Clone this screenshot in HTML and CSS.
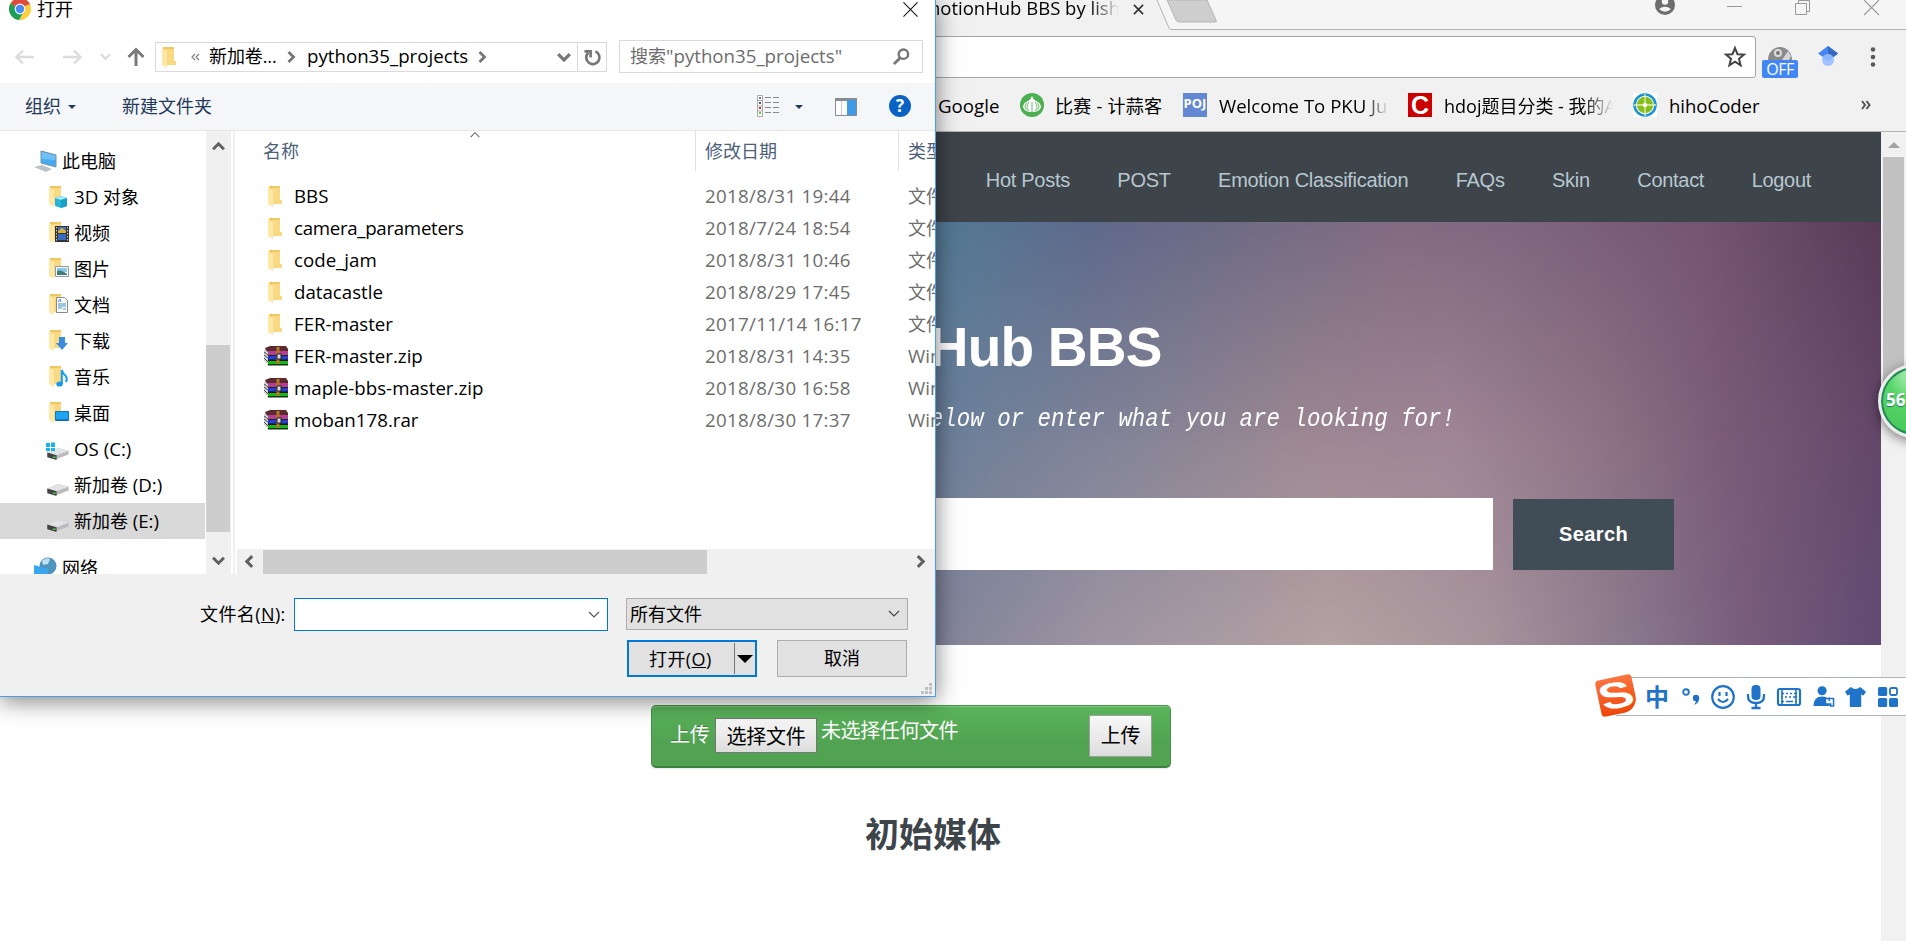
FILE: index.html
```html
<!DOCTYPE html>
<html lang="zh-CN">
<head>
<meta charset="utf-8">
<title>EmotionHub BBS</title>
<link rel="stylesheet" href="styles.css">
</head>
<body>
<svg class="defs" aria-hidden="true">
  <symbol id="folder" viewBox="0 0 14 21"><path d="M1 0h11v17H1z" fill="#f1c761"/><path d="M4 2h8v12h2v4H4z" fill="#f9da82"/><path d="M0 1l5 3v17l-5-3z" fill="#fde8a6"/></symbol>
  <symbol id="rar" viewBox="0 0 24 20">
    <path d="M1 2L6 0h16l2 3v4H3z" fill="#5a2a2c"/><path d="M0 3l4 3v13l-4-4z" fill="#d8d8d8"/><path d="M0 6l4 3M0 9l4 3M0 12l4 4" stroke="#444" fill="none"/>
    <path d="M4 5h20v4H4z" fill="#b43e9a"/><path d="M4 9h20v1.500H4z" fill="#222"/><path d="M4 10h20v4H4z" fill="#2a3fd0"/><path d="M4 13.500h20v1.500H4z" fill="#111"/><path d="M4 15h20v3H4z" fill="#16b61c"/><path d="M4 18h20v1.500H4z" fill="#063c08"/>
    <path d="M14 1v17" stroke="#b87a24" stroke-width="3"/><path d="M13 8h4v5h-4z" fill="#ddd" stroke="#222"/></symbol>
  <symbol id="drive" viewBox="0 0 24 14"><path d="M1 6L13 1l11 3v4l-13 5L1 10z" fill="#b9bbbe"/><path d="M1 6L13 1l11 3-13 5z" fill="#e2e3e5"/><path d="M1 6l10 3v5L1 11z" fill="#444"/><path d="M7 11h3" stroke="#4bd14b" stroke-width="1.500"/></symbol>
  <symbol id="chev" viewBox="0 0 12 12"><path d="M1 3.500L6 8.500 11 3.500" fill="none" stroke="currentColor" stroke-width="2.800"/></symbol>
  <symbol id="thinchev" viewBox="0 0 12 8"><path d="M1 1l5 5 5-5" fill="none" stroke="currentColor" stroke-width="1.200"/></symbol>
</svg>

<div class="browser">
  <div class="tabstrip">
    <span class="tab-title">EmotionHub BBS by lish</span>
    <svg class="tab-x" viewBox="0 0 12 12"><path d="M1 1l10 10M11 1L1 11" stroke="#333" stroke-width="1.800"/></svg>
    <svg class="tab-edge" viewBox="0 0 749 30"><path d="M0 0l13 29.500h736V0z" fill="#f5f5f5"/><path d="M0 0l12 28q.5 1.500 2 1.500h735" fill="none" stroke="#b3b3b3"/><path d="M10 0l9 20q.8 2 3 2h36q2 0 1-2L50 0z" fill="#cecece" stroke="#b5b5b5"/></svg>
    <div class="winctl">
      <svg class="w-user" viewBox="0 0 20 20"><circle cx="10" cy="10" r="10" fill="#6d6d6d"/><circle cx="10" cy="6.500" r="3.200" fill="#f5f5f5"/><path d="M4 14q6-4.500 12 0-6 5.500-12 0z" fill="#f5f5f5"/></svg>
      <svg class="w-min" viewBox="0 0 15 15"><path d="M0 6.500h15" stroke="#999"/></svg>
      <svg class="w-max" viewBox="0 0 15 15"><path d="M.5 3.500h11v11H.5zM3.500 3V.5h11v11H12" fill="none" stroke="#999"/></svg>
      <svg class="w-close" viewBox="0 0 15 15"><path d="M0 0l15 15M15 0L0 15" stroke="#999" stroke-width="1.100"/></svg>
    </div>
  </div>
  <div class="toolbar">
    <div class="omnibox"><svg viewBox="0 0 22 22"><path d="M11 2l2.500 6.200 6.500.4-5 4.200 1.600 6.500L11 15.700l-5.600 3.600L7 12.800 2 8.600l6.500-.4z" fill="none" stroke="#444" stroke-width="2"/></svg></div>
    <div class="ext-off"><svg viewBox="0 0 24 14"><path d="M0 14a12 13 0 0 1 24 0z" fill="#8a8a8a"/><circle cx="10" cy="7" r="4" fill="#ddd"/><circle cx="10" cy="7" r="2" fill="#777"/><path d="M14 14l6-9 3 5-2 4z" fill="#d5d5d5"/></svg><span>OFF</span></div>
    <svg class="ext-cap" viewBox="0 0 20 20"><path d="M0 7.500L10 0l10 7.500-10 7z" fill="#4285f4"/><path d="M10 0l10 7.500-5 4-5-4z" fill="#356ac3"/><circle cx="10" cy="14" r="6" fill="#a0c3ff"/><path d="M4.500 11.500q5.500-6 11 0L10 15z" fill="#76a7fa" opacity=".5"/></svg>
    <svg class="ext-dots" viewBox="0 0 6 20"><g fill="#5a5a5a"><circle cx="3" cy="2.500" r="2.300"/><circle cx="3" cy="10" r="2.300"/><circle cx="3" cy="17.500" r="2.300"/></g></svg>
  </div>
  <div class="bookmarks">
    <span class="bm b1">Google</span>
    <svg class="bi i1" viewBox="0 0 24 24"><circle cx="12" cy="12" r="12" fill="#4caf50"/><path d="M12 3q1 3 4 5 5 2 5 6-1 5-9 5t-9-5q0-4 5-6 3-2 4-5z" fill="#fff"/><path d="M9 9q-4 5 0 9M15 9q4 5 0 9M6.500 10q-3 4 0 7M17.500 10q3 4 0 7M12 9v10" fill="none" stroke="#4caf50" stroke-width=".8"/></svg>
    <span class="bm b2">比赛 - 计蒜客</span>
    <span class="bi poj">POJ</span>
    <span class="bm b3">Welcome To PKU Ju</span>
    <span class="bi cc">C</span>
    <span class="bm b4">hdoj题目分类 - 我的A</span>
    <svg class="bi i4" viewBox="0 0 24 24"><path d="M0 0h24v24H0z" fill="#fff"/><circle cx="12" cy="12" r="10.500" fill="#fff" stroke="#1a93d6" stroke-width="2.600"/><circle cx="12" cy="12" r="8.200" fill="#86bf1b"/><path d="M12 1v22M1 12h22" stroke="#dff0b8" stroke-width="1.300"/><circle cx="12" cy="12" r="2.200" fill="#fff"/></svg>
    <span class="bm b5">hihoCoder</span>
    <svg class="more" viewBox="0 0 10 10"><path d="M1 1l3 4-3 4M5.500 1l3 4-3 4" fill="none" stroke="#555" stroke-width="2"/></svg>
  </div>
  <div class="view">
    <div class="page">
      <nav class="sitenav"><a>Hot Posts</a><a>POST</a><a>Emotion Classification</a><a>FAQs</a><a>Skin</a><a>Contact</a><a>Logout</a></nav>
      <section class="hero">
        <h1>EmotionHub BBS</h1>
        <p>below or enter what you are looking for!</p>
        <div class="search"><div class="field"></div><div class="go">Search</div></div>
      </section>
      <div class="upload">
        <span class="up-label">上传</span><span class="up-choose">选择文件</span><span class="up-none">未选择任何文件</span><span class="up-send">上传</span>
      </div>
      <h2>初始媒体</h2>
    </div>
    <div class="vscroll"><svg viewBox="0 0 12 6"><path d="M0 6l6-6 6 6z" fill="#a3a3a3"/></svg><div class="vthumb"></div></div>
  </div>
</div>

<div class="speed">56</div>

<div class="ime">
  <div class="sogou"><span>S</span></div>
  <span class="zh">中</span>
  <svg class="m-punc" viewBox="0 0 18 18"><circle cx="4" cy="4" r="2.800" fill="none" stroke="#1f74c9" stroke-width="1.900"/><circle cx="14" cy="10" r="3.200" fill="#1f74c9"/><path d="M17.200 10q0 5-5 7 2-3 2-5z" fill="#1f74c9"/></svg>
  <svg class="m-face" viewBox="0 0 24 24" fill="none" stroke="#1f74c9" stroke-width="2.200"><circle cx="12" cy="12" r="10.800"/><path d="M7 14q5 6 10 0M8.500 7v4M15.500 7v4"/></svg>
  <svg class="m-mic" viewBox="0 0 18 24"><rect x="4.500" y="0" width="9" height="15" rx="4" fill="#1f74c9"/><path d="M1 9v2q0 7 8 7t8-7V9M9 18v4M4.500 23h9" fill="none" stroke="#1f74c9" stroke-width="2.300"/></svg>
  <svg class="m-key" viewBox="0 0 24 18"><rect x="1" y="1" width="22" height="16" rx="2" fill="none" stroke="#1f74c9" stroke-width="2.200"/><path d="M4 5.500h3m2 0h2m2 0h2m2 0h3M4 9h2m2 0h2m2 0h2m2 0h4M4 13.500h3m2 0h7m2 0h2M5 2v15M19 2v15" stroke="#1f74c9" stroke-width="1.600"/></svg>
  <svg class="m-user" viewBox="0 0 22 22"><circle cx="9" cy="5" r="4.800" fill="#1f74c9"/><path d="M0 21q0-10 9-10 6 0 8 5v5z" fill="#1f74c9"/><path d="M12.500 13h8.500v8h-3v-2h-5.500z" fill="#fff" stroke="#1f74c9" stroke-width="1.600"/><path d="M16.500 12v4" stroke="#1f74c9" stroke-width="1.500"/></svg>
  <svg class="m-shirt" viewBox="0 0 22 21"><path d="M6 0q5 4 10 0l6 5-2.500 4-2.500-1v12q0 1-1 1H6q-1 0-1-1V8L2.500 9 0 5z" fill="#1f74c9"/></svg>
  <svg class="m-grid" viewBox="0 0 20 20"><g fill="#1f74c9"><rect width="9.200" height="9" rx="1.500"/><rect y="11" width="9.200" height="9" rx="1.500"/><rect x="11" y="11" width="9" height="9" rx="1.500"/></g><rect x="12" y="1" width="7" height="7" rx="1.500" fill="none" stroke="#1f74c9" stroke-width="1.800"/></svg>
</div>

<div class="dialog">
  <div class="d-title">
    <svg class="chrome" viewBox="0 0 22 22"><circle cx="11" cy="11" r="11" fill="#fdd03b"/><path d="M11 11L1.500 5.500A11 11 0 0 1 20.500 5.500z" fill="#dd4b3e"/><path d="M1.500 5.500A11 11 0 0 0 10 22l5-9-4-2z" fill="#1a9f5c"/><path d="M11 6h9.800" stroke="#dd4b3e" stroke-width="1"/><circle cx="11" cy="11" r="5.400" fill="#f4f4f4"/><circle cx="11" cy="11" r="4.200" fill="#4a8af4"/></svg>
    <span>打开</span>
    <svg class="d-close" viewBox="0 0 16 16"><path d="M.5.5l15 15M15.500.5l-15 15" stroke="#111" stroke-width="1.100"/></svg>
  </div>
  <div class="d-nav">
    <svg class="n-back" viewBox="0 0 20 16"><path d="M19 8H2M8 1.500L1.500 8 8 14.500" fill="none" stroke="#dcdcdc" stroke-width="2.400"/></svg>
    <svg class="n-fwd" viewBox="0 0 20 16"><path d="M1 8h17M12 1.500L18.500 8 12 14.500" fill="none" stroke="#dcdcdc" stroke-width="2.400"/></svg>
    <svg class="n-hist" viewBox="0 0 12 12"><use href="#chev"/></svg>
    <svg class="n-up" viewBox="0 0 18 20"><path d="M9 19V3M1.500 10L9 2.500 16.500 10" fill="none" stroke="#7a7a7a" stroke-width="3"/></svg>
    <div class="addr">
      <svg class="a-fold"><use href="#folder"/></svg>
      <svg class="a-lt" viewBox="0 0 9 8"><path d="M4 1L1 4l3 3M8 1L5 4l3 3" fill="none" stroke="#777" stroke-width="1.100"/></svg>
      <span class="a-vol">新加卷...</span>
      <svg class="a-c a-c1"><use href="#chev"/></svg>
      <span class="a-dir">python35_projects</span>
      <svg class="a-c a-c2"><use href="#chev"/></svg>
      <svg class="a-down"><use href="#chev"/></svg>
      <div class="a-ref"><svg viewBox="0 0 18 18"><path d="M12 2.500A7 7 0 1 1 4.500 4M.5 2.500h6.500V9" fill="none" stroke="#777" stroke-width="2.800"/></svg></div>
    </div>
    <div class="find"><span>搜索<span class="lat">"python35_projects"</span></span><svg viewBox="0 0 18 18"><circle cx="11" cy="6.500" r="5" fill="none" stroke="#777" stroke-width="2.600"/><path d="M7.500 10.500L1 17" stroke="#777" stroke-width="3"/></svg></div>
  </div>
  <div class="d-tools">
    <span class="t-org">组织</span><i class="tri t1"></i><span class="t-new">新建文件夹</span>
    <svg class="t-list" viewBox="0 0 22 22"><path d="M.5.500h5v21h-5zM.5 5.500h5M.5 11h5M.5 16h5" fill="#fff" stroke="#aaa"/><path d="M2 2h2v2H2z" fill="#4a89b8"/><path d="M2 7h2v2H2z" fill="#558"/><path d="M2 12h2v2H2z" fill="#d32"/><path d="M2 17h2v2H2z" fill="#7b5"/><path d="M8 2.500h6m2 0h6M8 7.500h6m2 0h6M8 12.500h6m2 0h6M8 17.500h6m2 0h6" stroke="#8a8a8a"/></svg>
    <i class="tri t2"></i>
    <svg class="t-pane" viewBox="0 0 22 18"><path d="M.5.500h21v17H.5z" fill="#fff" stroke="#858c94"/><path d="M0 0h22v3H0z" fill="#858c94"/><path d="M6.500 3v14" stroke="#ccc"/><path d="M12 2h9v15h-9z" fill="#3f9be8"/></svg>
    <span class="t-help">?</span>
  </div>
  <div class="d-body">
    <div class="tree">
      <div class="row root"><svg viewBox="0 0 24 22"><path d="M7 1l15 4v12L7 13z" fill="#47a9ee"/><path d="M7 1l15 4v5L7 9z" fill="#6cc0f7"/><path d="M7 1l15 4v12L7 13z" fill="none" stroke="#7390a8"/><path d="M0 17l8-2 10 4-6 3z" fill="#b9c2ca"/></svg>此电脑</div>
      <div class="row"><svg class="f" viewBox="0 0 20 22"><use href="#folder" width="14" height="21"/><path d="M12 10l6 2v8l-6 2-6-2v-8z" fill="#25b5d8"/><path d="M6 12l6-2 6 2-6 2z" fill="#a5ecf7"/><path d="M12 14l6-2v8l-6 2z" fill="#18a0c6"/></svg><span><span class="lat">3D</span> 对象</span></div>
      <div class="row"><svg class="f" viewBox="0 0 20 22"><use href="#folder" width="14" height="21"/><path d="M6 4h14v16H6z" fill="#333"/><path d="M9 5h8v6H9z" fill="#4971c8"/><path d="M9 12h8v6H9z" fill="#386bc0"/><path d="M9 9l4-3 4 3v2H9z" fill="#d7b33a"/><path d="M7.500 5v14M18.500 5v14" stroke="#ccc" stroke-dasharray="1.500 1.500"/></svg>视频</div>
      <div class="row"><svg class="f" viewBox="0 0 20 22"><use href="#folder" width="14" height="21"/><path d="M6.500 8.500h13v10h-13z" fill="#fff" stroke="#8f9aa3"/><path d="M8 10h10v4H8z" fill="#8bc8f0"/><path d="M8 13q4-2 10 3v1H8z" fill="#3f7d7a"/></svg>图片</div>
      <div class="row"><svg class="f" viewBox="0 0 20 22"><use href="#folder" width="14" height="21"/><path d="M7.500 3.500h8l3 3v12h-11z" fill="#fff" stroke="#888"/><path d="M9 8l2-3 1 3M9 10h8M9 12h8M9 14h4M14 15h3" stroke="#3b91c9" fill="none"/></svg>文档</div>
      <div class="row"><svg class="f" viewBox="0 0 20 22"><use href="#folder" width="14" height="21"/><path d="M10 7h6v6h3l-6 7-6-7h3z" fill="#3a8dde"/></svg>下载</div>
      <div class="row"><svg class="f" viewBox="0 0 20 22"><use href="#folder" width="14" height="21"/><ellipse cx="10.500" cy="18" rx="3.200" ry="2.600" fill="#159df2"/><path d="M12.800 18V4q1 4 4 6 2 3 0 6" fill="none" stroke="#159df2" stroke-width="2"/></svg>音乐</div>
      <div class="row"><svg class="f" viewBox="0 0 20 22"><use href="#folder" width="14" height="21"/><path d="M6.500 9.500h13v9h-13z" fill="#1fa3f5" stroke="#1278b9"/><path d="M7 18h12" stroke="#0b5c93"/></svg>桌面</div>
      <div class="row"><svg class="dr" viewBox="0 0 23 18"><use href="#drive" y="5" width="23" height="13"/><path d="M0 1h4v4H0zM5 .500h4V5H5zM0 6h4v3H0zM5 6h4v3H5z" fill="#18b4f0"/></svg><span class="lat">OS (C:)</span></div>
      <div class="row"><svg class="dr" viewBox="0 0 23 18"><use href="#drive" y="5" width="23" height="13"/></svg><span>新加卷 <span class="lat">(D:)</span></span></div>
      <div class="row sel"><svg class="dr" viewBox="0 0 23 18"><use href="#drive" y="5" width="23" height="13"/></svg><span>新加卷 <span class="lat">(E:)</span></span></div>
      <div class="row root net"><svg viewBox="0 0 24 22"><circle cx="14" cy="9" r="8.500" fill="#4f94bd"/><path d="M8 4q4-4 8-2l-2 5-5 1z" fill="#bfe0ef"/><path d="M0 8l14 4v10L0 20z" fill="#3ba5ee"/></svg>网络</div>
    </div>
    <div class="tscroll"><svg class="up"><use href="#chev"/></svg><div class="tthumb"></div><svg><use href="#chev"/></svg></div>
    <div class="split"></div>
    <div class="list">
      <div class="lhead"><svg class="sort"><use href="#thinchev"/></svg><span class="c1">名称</span><span class="c2">修改日期</span><span class="c3">类型</span></div>
      <div class="files">
        <div class="file"><svg class="fo"><use href="#folder"/></svg><span class="c1">BBS</span><span class="c2">2018/8/31 19:44</span><span class="c3">文件夹</span></div>
        <div class="file"><svg class="fo"><use href="#folder"/></svg><span class="c1 tight">camera_parameters</span><span class="c2">2018/7/24 18:54</span><span class="c3">文件夹</span></div>
        <div class="file"><svg class="fo"><use href="#folder"/></svg><span class="c1">code_jam</span><span class="c2">2018/8/31 10:46</span><span class="c3">文件夹</span></div>
        <div class="file"><svg class="fo"><use href="#folder"/></svg><span class="c1">datacastle</span><span class="c2">2018/8/29 17:45</span><span class="c3">文件夹</span></div>
        <div class="file"><svg class="fo"><use href="#folder"/></svg><span class="c1">FER-master</span><span class="c2">2017/11/14 16:17</span><span class="c3">文件夹</span></div>
        <div class="file"><svg class="ra"><use href="#rar"/></svg><span class="c1">FER-master.zip</span><span class="c2">2018/8/31 14:35</span><span class="c3 lat">WinRAR</span></div>
        <div class="file"><svg class="ra"><use href="#rar"/></svg><span class="c1">maple-bbs-master.zip</span><span class="c2">2018/8/30 16:58</span><span class="c3 lat">WinRAR</span></div>
        <div class="file"><svg class="ra"><use href="#rar"/></svg><span class="c1">moban178.rar</span><span class="c2">2018/8/30 17:37</span><span class="c3 lat">WinRAR</span></div>
      </div>
      <div class="hscroll"><svg class="lt"><use href="#chev"/></svg><div class="hthumb"></div><svg class="rt"><use href="#chev"/></svg></div>
    </div>
  </div>
  <div class="d-foot">
    <div class="f-line">
      <span class="f-label">文件名(<u>N</u>):</span>
      <div class="f-input"><svg><use href="#thinchev"/></svg></div>
      <div class="f-sel"><span>所有文件</span><svg><use href="#thinchev"/></svg></div>
    </div>
    <div class="f-btns">
      <div class="open"><span>打开(<u>O</u>)</span><i class="arr"></i></div>
      <div class="cancel">取消</div>
    </div>
    <svg class="grip" viewBox="0 0 12 12"><path d="M8 0h3v3H8zM4 4h3v3H4zM8 4h3v3H8zM0 8h3v3H0zM4 8h3v3H4zM8 8h3v3H8z" fill="#bfbfbf"/></svg>
  </div>
</div>
</body>
</html>
```

FILE: styles.css
```css
* { box-sizing: border-box; }
html, body { margin: 0; width: 1906px; height: 941px; overflow: hidden; background: #fff; }
body { position: relative; font: 18px/24px "Open Sans", "Noto Sans CJK SC", sans-serif; color: #000; white-space: nowrap; }
svg { display: block; flex: none; overflow: visible; }
.defs { position: absolute; width: 0; height: 0; }
span, a { flex: none; }

/* browser chrome */
.browser { display: flex; flex-direction: column; height: 941px; }
.tabstrip { position: relative; height: 30px; background: #f1f1f1; display: flex; align-items: flex-start; }
.tab-title { width: 1120px; height: 24px; margin-top: -4px; text-align: right; font-size: 18.5px; -webkit-mask-image: linear-gradient(to right, #000 1090px, transparent 1119px); mask-image: linear-gradient(to right, #000 1090px, transparent 1119px); }
.tab-x { width: 11px; height: 11px; margin: 4px 0 0 13px; }
.tab-edge { position: absolute; left: 1157px; top: 0; width: 749px; height: 30px; }
.winctl { position: absolute; right: 27px; top: 0; display: flex; }
.w-user { width: 20px; height: 20px; margin: -5px 52px 0 0; }
.w-min { width: 15px; height: 15px; margin-right: 53px; }
.w-max { width: 15px; height: 15px; margin-right: 54px; }
.w-close { width: 15px; height: 15px; }
.toolbar { height: 48px; background: #f1f1f1; display: flex; align-items: flex-start; padding-top: 6px; }
.omnibox { width: 1756px; height: 42px; border: 1px solid #a6a6a6; border-radius: 3px; background: #fff; display: flex; justify-content: flex-end; align-items: center; padding-right: 9px; }
.omnibox svg { width: 22px; height: 22px; }
.ext-off { width: 36px; margin-left: 6px; padding-top: 10px; display: flex; flex-direction: column; align-items: center; }
.ext-off svg { width: 24px; height: 14px; }
.ext-off span { width: 36px; height: 18px; border-radius: 2px; background: #4285f4; color: #fff; font: 16px/18px "Open Sans", sans-serif; letter-spacing: -.5px; text-align: center; }
.ext-cap { width: 20px; height: 20px; margin: 10px 0 0 20px; }
.ext-dots { width: 6px; height: 20px; margin: 11px 0 0 32px; }
.bookmarks { height: 54px; background: #f1f1f1; border-bottom: 1px solid #b2b4b3; display: flex; align-items: flex-start; padding: 15px 0 0 938px; }
.bm { height: 26px; line-height: 26px; overflow: hidden; }
.bi { width: 24px; height: 24px; flex: none; }
.b1 { width: 82px; font-size: 18.7px; }
.b2 { width: 128px; margin-left: 11px; letter-spacing: .25px; }
.b3 { width: 173px; margin-left: 12px; font-size: 18.6px; -webkit-mask-image: linear-gradient(to right, #000 145px, transparent 170px); mask-image: linear-gradient(to right, #000 145px, transparent 170px); }
.b4 { width: 170px; margin-left: 12px; -webkit-mask-image: linear-gradient(to right, #000 140px, transparent 169px); mask-image: linear-gradient(to right, #000 140px, transparent 169px); }
.cc { margin-left: 16px; background: #cb0000; color: #fff; font: bold 25px/24px "Liberation Sans", sans-serif; text-align: center; }
.poj { background: #6388d3; color: #fff; font: bold 13px/21px "Open Sans", sans-serif; text-align: center; overflow: hidden; }
.i4 { margin-left: 19px; }
.b5 { width: 95px; margin-left: 12px; font-size: 18.5px; }
.more { width: 10px; height: 10px; margin: 7px 0 0 97px; }

/* web page */
.view { flex: 1; display: flex; min-height: 0; }
.page { width: 1881px; display: flex; flex-direction: column; align-items: center; }
.sitenav { width: 1881px; height: 90px; background: #3d444a; display: flex; align-items: center; justify-content: flex-end; gap: 47.500px; padding-right: 70px; color: #b8c7d0; font: 20px/24px "Liberation Sans", sans-serif; letter-spacing: -.3px; padding-top: 5px; }
.hero { position: relative; z-index: 0; width: 1881px; height: 423px; display: flex; flex-direction: column; align-items: center; background: linear-gradient(to right, #527a95 49.800%, #5f698b 58%, #746c84 68%, #836b82 74.400%, #7f6880 80%, #765572 90.400%, #573b57); }
.hero::before, .hero::after { content: ""; position: absolute; inset: 0; z-index: -1; }
.hero::before { background: linear-gradient(to right, #6b7f9a 49.800%, #838497 60%, #9c8792 69%, #a08696 77%, #8f7386 85%, #7b5c78 91.500%, #64476a); -webkit-mask-image: linear-gradient(transparent, #000 52%); mask-image: linear-gradient(transparent, #000 52%); }
.hero::after { background: linear-gradient(to right, #838499 49.800%, #9e94a2 58.500%, #b4a2a3 70.700%, #a6949c 79%, #85748a 87.700%, #785c7c 93%, #604b73); -webkit-mask-image: linear-gradient(transparent 48%, #000); mask-image: linear-gradient(transparent 48%, #000); }
.hero h1 { margin: 93px 0 0 -5px; font: bold 55px/64px "Liberation Sans", sans-serif; letter-spacing: -.8px; color: #fff; }
.hero p { margin: 26px 0 0; width: 1455px; align-self: flex-start; text-align: right; font: italic 22.450px/28px "Liberation Mono", monospace; color: #fff; transform: scaleY(1.120); }
.search { display: flex; gap: 20px; align-self: flex-start; margin-top: 65px; }
.field { width: 1493px; height: 72px; background: #fff; }
.go { width: 161px; height: 71px; margin-top: 1px; background: #414d56; color: #fff; font: bold 20px/70px "Liberation Sans", sans-serif; text-align: center; letter-spacing: .4px; }
.upload { width: 520px; height: 63px; margin: 60px 0 0 -59px; border: 1px solid #469546; border-bottom: 2px solid #3c803e; border-radius: 5px; background: linear-gradient(#5bb55b, #51a351 60%, #51a351); box-shadow: inset 0 1px 0 #7cc87c, 0 1px 2px rgba(0,0,0,.1); display: flex; align-items: flex-start; padding-left: 18px; font-size: 20px; line-height: 28px; letter-spacing: -.3px; color: #fff; }
.up-label { width: 45px; margin-top: 15px; text-shadow: 0 -1px 0 rgba(0,0,0,.25); }
.up-choose { width: 102px; height: 35px; margin: 12px 4px 0 0; border: 1px solid #767676; background: linear-gradient(#f8f8f8, #ddd); color: #000; text-align: center; line-height: 35px; }
.up-none { width: 268px; margin-top: 11px; letter-spacing: -.4px; }
.up-send { width: 63px; height: 42px; margin-top: 9px; border: 1px solid #a0a0a0; background: linear-gradient(#f8f8f8, #ddd); color: #000; text-align: center; line-height: 40px; }
.page h2 { margin: 40px 0 0 -15px; font: bold 34px/50px "Noto Sans CJK SC", sans-serif; color: #3d444a; }
.vscroll { width: 25px; background: #f1f1f1; display: flex; flex-direction: column; align-items: center; padding-top: 10px; }
.vscroll svg { width: 12px; height: 6px; }
.vthumb { width: 21px; height: 240px; margin-top: 9px; background: #c1c1c1; }

/* floating widgets */
.speed { position: absolute; left: 1878px; top: 364px; width: 74px; height: 74px; border-radius: 50%; border: 3px solid #ececec; background: radial-gradient(circle at 50% 10%, #c2f2c8, #56d567 40%, #43c655); box-shadow: inset 0 0 0 2px #25865a, 0 3px 12px rgba(0,0,0,.5); color: #fff; font: bold 17px/66px "Open Sans", sans-serif; padding-left: 5px; text-shadow: 0 1px 1px #276; }
.ime { position: absolute; left: 1596px; top: 677px; width: 310px; height: 39px; display: flex; align-items: center; background: linear-gradient(#adb3b4, #adb3b4) 35px 0 / 100% 1px no-repeat, linear-gradient(#adb3b4, #adb3b4) 20px 100% / 100% 1px no-repeat, linear-gradient(#fff, #fff) 20px 0 no-repeat; }
.sogou { width: 37px; height: 37px; margin: -2px 10px 0 2px; border-radius: 4px 4px 14px 4px; background: linear-gradient(#fb7440, #ee4708); transform: rotate(-12deg); display: flex; justify-content: center; align-items: center; }
.sogou span { color: #fff; font: bold 37px/38px "Liberation Sans", sans-serif; transform: scaleX(1.350) skewX(8deg); }
.zh { width: 24px; color: #1f74c9; font: bold 24px/36px "Noto Sans CJK SC", sans-serif; margin-top: -2px; }
.m-punc { width: 18px; height: 18px; margin-left: 13px; }
.m-face { width: 24px; height: 24px; margin-left: 11px; }
.m-mic { width: 18px; height: 24px; margin-left: 12px; }
.m-key { width: 24px; height: 18px; margin-left: 12px; }
.m-user { width: 22px; height: 21px; margin-left: 12px; }
.m-shirt { width: 21px; height: 20px; margin-left: 10px; }
.m-grid { width: 20px; height: 20px; margin-left: 12px; }

/* file dialog */
.dialog { position: absolute; left: 0; top: 0; width: 936px; height: 697px; background: #fff; border: solid #4a9bf0; border-width: 0 1px 1px 0; box-shadow: 0 4px 22px rgba(0,0,0,.5); display: flex; flex-direction: column; overflow: visible; }
.lat, .file .c1, .file .c2, .a-dir { font-size: 18.700px; }
.d-title { height: 40px; display: flex; align-items: flex-start; }
.chrome { width: 22px; height: 22px; margin: -2px 6px 0 9px; }
.d-title span { width: 866px; margin-top: -3px; }
.d-close { width: 15px; height: 15px; margin-top: 2px; }
.d-nav { height: 43px; display: flex; align-items: flex-start; color: #777; }
.n-back { width: 20px; height: 16px; margin: 9px 0 0 15px; }
.n-fwd { width: 20px; height: 16px; margin: 9px 0 0 27px; }
.n-hist { width: 11px; height: 11px; margin: 11px 0 0 18px; color: #dcdcdc; }
.n-up { width: 18px; height: 20px; margin: 7px 10px 0 16px; }
.addr { width: 452px; height: 30px; margin-top: 2px; border: 1px solid #d9d9d9; display: flex; align-items: center; }
.a-fold { width: 14px; height: 21px; margin-left: 6px; }
.a-lt { width: 9px; height: 8px; margin: 0 9px 0 15px; }
.a-vol, .a-dir { color: #000; }
.a-vol { width: 68px; overflow: hidden; margin-top: -2px; letter-spacing: -.1px; }
.a-c { width: 12px; height: 12px; transform: rotate(-90deg); }
.a-c1 { margin: 0 10px 0 8px; }
.a-dir { width: 161px; margin-top: -3px; }
.a-c2 { margin-left: 8px; }
.a-down { width: 14px; height: 14px; margin-left: auto; margin-right: 6px; }
.a-ref { width: 29px; height: 28px; border-left: 1px solid #d9d9d9; padding: 6px 6px; }
.a-ref svg { width: 17px; height: 17px; }
.find { width: 304px; height: 33px; margin-left: 12px; border: 1px solid #d9d9d9; display: flex; align-items: center; justify-content: space-between; padding: 0 12px 0 10px; color: #6d6d6d; }
.find > span { margin-top: -2px; }
.find svg { width: 17px; height: 17px; }
.d-tools { height: 48px; background: #f5f6f8; border-bottom: 1px solid #e4e5e7; display: flex; align-items: center; padding-left: 25px; color: #1e395b; }
.t-org, .t-new { margin-top: -2px; }
.tri { width: 0; height: 0; border: 4px solid transparent; border-top-color: #1e395b; border-bottom: 0; }
.t1 { margin: 0 46px 0 7px; }
.t2 { margin: 0 32px 0 16px; }
.t-new { flex: 1; }
.t-list { width: 22px; height: 22px; margin-top: -2px; }
.t-pane { width: 22px; height: 18px; }
.t-help { width: 22px; height: 22px; margin: -1px 24px 0 32px; border-radius: 50%; background: #0a63c4; color: #fff; font: bold 17px/22px "Open Sans", sans-serif; text-align: center; }
.d-body { height: 443px; display: flex; overflow: hidden; }
.tree { width: 205px; padding-top: 12px; }
.row { height: 36px; display: flex; align-items: center; padding-left: 49px; }
.row svg { width: 20px; height: 22px; margin: 0 5px 0 0; }
.row svg.dr { width: 23px; height: 18px; margin: 4px 5px 0 -3px; }
.row.root { padding-left: 34px; }
.row.root svg { width: 24px; height: 22px; margin-right: 4px; }
.sel { background: #d9d9d9; }
.net { margin-top: 11px; }
.tscroll { width: 25px; margin-left: 1px; background: #f0f0f0; display: flex; flex-direction: column; align-items: center; padding: 9px 1px 6px 0; color: #606060; }
.tscroll svg { width: 13px; height: 13px; }
.tscroll .up { transform: rotate(180deg); }
.tthumb { width: 24px; height: 187px; margin: 192px 0 22px; background: #cdcdcd; }
.split { width: 4px; margin-left: 0; border-right: 2px solid #f0f0f0; }
.list { width: 700px; display: flex; flex-direction: column; overflow: hidden; padding-left: 2px; }
.lhead { position: relative; height: 40px; display: flex; color: #4c607a; line-height: 41px; padding-left: 26px; }
.lhead .c1 { width: 432px; }
.lhead .c2 { width: 203px; border-left: 1px solid #e2e3e5; padding-left: 9px; }
.lhead .c3 { border-left: 1px solid #e2e3e5; padding-left: 9px; }
.sort { position: absolute; left: 232px; top: 0; width: 12px; height: 7px; transform: rotate(180deg); color: #666; }
.files { height: 378px; padding-top: 9px; }
.file { height: 32px; display: flex; align-items: center; }
.fo { width: 14px; height: 21px; margin: 0 12px 0 31px; }
.ra { width: 24px; height: 20px; margin: 0 6px 0 27px; }
.file .c1 { width: 411px; }
.file .tight { letter-spacing: -.3px; }
.file .c2 { width: 203px; color: #6d6d6d; letter-spacing: .32px; }
.file .c3 { color: #6d6d6d; }
.hscroll { height: 25px; background: #f0f0f0; display: flex; align-items: center; color: #606060; }
.hscroll svg { width: 13px; height: 13px; }
.hscroll .lt { transform: rotate(90deg); margin: 0 7px 0 6px; }
.hscroll .rt { transform: rotate(-90deg); margin-left: 207px; }
.hthumb { width: 444px; height: 24px; background: #cdcdcd; flex: none; }
.d-foot { position: relative; flex: 1; background: #f0f0f0; padding-top: 24px; }
.f-line { display: flex; }
.f-label { width: 94px; margin-left: 200px; line-height: 32px; letter-spacing: .4px; }
.f-input { width: 314px; height: 33px; border: 1px solid #0078d7; background: #fff; display: flex; align-items: center; justify-content: flex-end; padding-right: 7px; color: #555; }
.f-input svg, .f-sel svg { width: 12px; height: 8px; }
.f-sel { width: 282px; height: 32px; margin-left: 18px; border: 1px solid #adadad; background: #e1e1e1; display: flex; align-items: center; justify-content: space-between; padding: 0 7px 0 3px; color: #444; }
.f-sel span { color: #000; }
.f-btns { display: flex; gap: 20px; margin: 9px 0 0 627px; }
.open { width: 130px; height: 37px; border: 2px solid #0078d7; background: #e1e1e1; display: flex; align-items: center; padding-left: 20px; }
.open span { width: 85px; letter-spacing: .4px; }
.arr { flex: 1; height: 31px; border-left: 1px solid #777; display: flex; align-items: center; justify-content: center; }
.arr::before { content: ""; border: 8px solid transparent; border-top-color: #000; border-bottom: 0; }
.cancel { width: 130px; height: 37px; border: 1px solid #adadad; background: #e1e1e1; text-align: center; line-height: 35px; }
.grip { position: absolute; right: 2px; bottom: 1px; width: 12px; height: 12px; }
```
